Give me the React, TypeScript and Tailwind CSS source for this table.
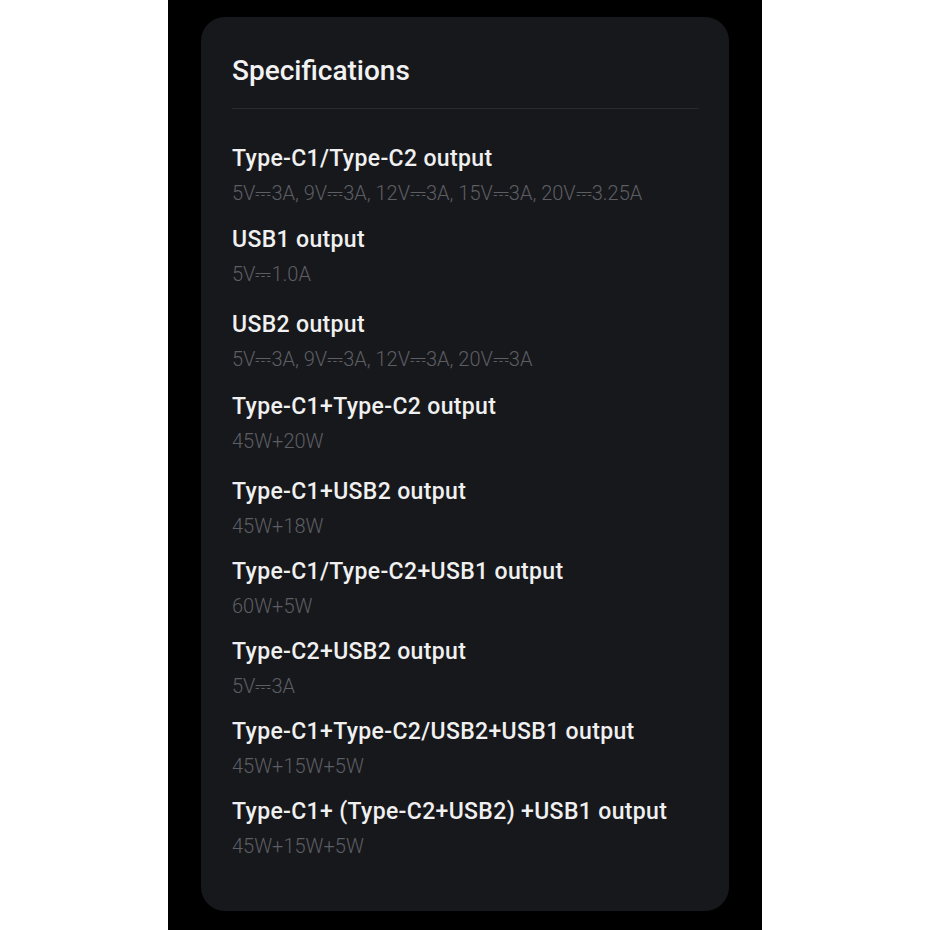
import React from "react";

const items: { label: string; value: string; mt: string }[] = [
  { label: "Type-C1/Type-C2 output", value: "5V⎓3A, 9V⎓3A, 12V⎓3A, 15V⎓3A, 20V⎓3.25A", mt: "mt-0" },
  { label: "USB1 output", value: "5V⎓1.0A", mt: "mt-[11px]" },
  { label: "USB2 output", value: "5V⎓3A, 9V⎓3A, 12V⎓3A, 20V⎓3A", mt: "mt-[15px]" },
  { label: "Type-C1+Type-C2 output", value: "45W+20W", mt: "mt-[12px]" },
  { label: "Type-C1+USB2 output", value: "45W+18W", mt: "mt-[15px]" },
  { label: "Type-C1/Type-C2+USB1 output", value: "60W+5W", mt: "mt-[10px]" },
  { label: "Type-C2+USB2 output", value: "5V⎓3A", mt: "mt-[10px]" },
  { label: "Type-C1+Type-C2/USB2+USB1 output", value: "45W+15W+5W", mt: "mt-[10px]" },
  { label: "Type-C1+ (Type-C2+USB2) +USB1 output", value: "45W+15W+5W", mt: "mt-[10px]" },
];

export default function App() {
  return (
    <div className="w-[930px] h-[930px] bg-white flex justify-center" style={{ fontFamily: "Roboto, 'DejaVu Sans', sans-serif" }}>
      <div className="w-[594px] h-[930px] bg-black pt-[17px] flex flex-col items-center">
        <div className="w-[528px] h-[894px] bg-[#17181c] rounded-[24px] px-[31px]">
          <h2 className="pt-[36px] text-[28px] leading-[36px] font-medium text-[#f2f2f2]">
            Specifications
          </h2>
          <div className="mt-[19px] h-px bg-[#2a2b30]" />
          <div className="mt-[32px] flex flex-col">
            {items.map((it, i) => (
              <div key={i} className={it.mt}>
                <div className="text-[23px] leading-[35px] font-medium tracking-[0.35px] text-[#f0f0f0]">{it.label}</div>
                <div className="text-[20px] leading-[35px] font-light text-[#5d5e63]">{it.value}</div>
              </div>
            ))}
          </div>
        </div>
      </div>
    </div>
  );
}
